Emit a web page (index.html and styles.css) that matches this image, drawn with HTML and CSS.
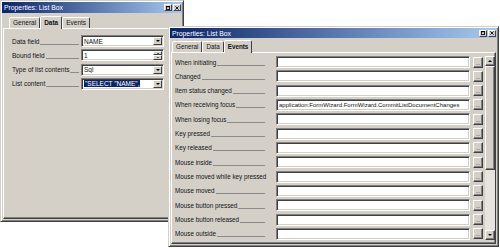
FILE: index.html
```html
<!DOCTYPE html>
<html>
<head>
    <title>Properties: List Box</title>
    <link rel="stylesheet" href="styles.css">
</head>
<body>
    <div class="window win-data">
        <div class="titlebar">
            <span>Properties: List Box</span>
            <div class="tbtns">
                <span class="tbtn"><svg viewBox="0 0 5 5"><rect x="0.5" y="0.5" width="4" height="4" fill="none" stroke="#000"/><rect x="0" y="0" width="5" height="1.5" fill="#000"/></svg></span>
                <span class="tbtn"><svg viewBox="0 0 5 5"><path d="M0.5 0.5L4.5 4.5M4.5 0.5L0.5 4.5" stroke="#000" stroke-width="1.1"/></svg></span>
            </div>
        </div>
        <div class="tabs">
            <span class="tab">General</span>
            <span class="tab active">Data</span>
            <span class="tab">Events</span>
        </div>
        <div class="panel">
            <div class="data-rows">
                <span class="label">Data field</span>
                <div class="field"><span class="value">NAME</span><span class="drop"></span></div>

                <span class="label">Bound field</span>
                <div class="field"><span class="value">1</span><span class="spin"><span class="up"></span><span class="down"></span></span></div>

                <span class="label">Type of list contents</span>
                <div class="field"><span class="value">Sql</span><span class="drop"></span></div>

                <span class="label">List content</span>
                <div class="field"><span class="value"><span class="sel">"SELECT "NAME",</span></span><span class="drop"></span></div>
            </div>
        </div>
    </div>

    <div class="window win-events">
        <div class="titlebar">
            <span>Properties: List Box</span>
            <div class="tbtns">
                <span class="tbtn"><svg viewBox="0 0 5 5"><rect x="0.5" y="0.5" width="4" height="4" fill="none" stroke="#000"/><rect x="0" y="0" width="5" height="1.5" fill="#000"/></svg></span>
                <span class="tbtn"><svg viewBox="0 0 5 5"><path d="M0.5 0.5L4.5 4.5M4.5 0.5L0.5 4.5" stroke="#000" stroke-width="1.1"/></svg></span>
            </div>
        </div>
        <div class="tabs">
            <span class="tab">General</span>
            <span class="tab">Data</span>
            <span class="tab active">Events</span>
        </div>
        <div class="panel">
            <div class="events-body">
                <div class="events-rows">
                    <span class="label">When initiating</span><div class="field"></div><span class="dots">...</span>
                    <span class="label">Changed</span><div class="field"></div><span class="dots">...</span>
                    <span class="label">Item status changed</span><div class="field"></div><span class="dots">...</span>
                    <span class="label">When receiving focus</span><div class="field macro">application:FormWizard.FormWizard.CommitListDocumentChanges</div><span class="dots">...</span>
                    <span class="label">When losing focus</span><div class="field"></div><span class="dots">...</span>
                    <span class="label">Key pressed</span><div class="field"></div><span class="dots">...</span>
                    <span class="label">Key released</span><div class="field"></div><span class="dots">...</span>
                    <span class="label">Mouse inside</span><div class="field"></div><span class="dots">...</span>
                    <span class="label">Mouse moved while key pressed</span><div class="field"></div><span class="dots">...</span>
                    <span class="label">Mouse moved</span><div class="field"></div><span class="dots">...</span>
                    <span class="label">Mouse button pressed</span><div class="field"></div><span class="dots">...</span>
                    <span class="label">Mouse button released</span><div class="field"></div><span class="dots">...</span>
                    <span class="label">Mouse outside</span><div class="field"></div><span class="dots">...</span>
                </div>
                <div class="scrollbar">
                    <span class="arrow arrow-up"></span>
                    <span class="thumb"></span>
                    <span class="track"></span>
                    <span class="arrow arrow-down"></span>
                </div>
            </div>
        </div>
    </div>
</body>
</html>
```

FILE: styles.css
```css
* {
    margin: 0;
    padding: 0;
    box-sizing: border-box;
}

body {
    position: relative;
    width: 500px;
    height: 249px;
    overflow: hidden;
    background: #fff;
    font-family: "Liberation Sans", Arial, sans-serif;
    font-size: 6.5px;
    color: #111;
}

/* windows on the desktop */
.window {
    position: absolute;
    display: flex;
    flex-direction: column;
    padding: 1px;
    background: #d4d0c8;
    border: 1px solid;
    border-color: #d4d0c8 #404040 #404040 #d4d0c8;
    box-shadow: inset 1px 1px #fff, inset -1px -1px #808080;
}

.win-data {
    left: 0;
    top: 0;
    width: 184px;
    height: 222px;
}

.win-events {
    left: 168px;
    top: 26px;
    width: 331px;
    height: 221px;
    font-size: 6.3px;
}

.titlebar {
    flex: none;
    height: 11px;
    display: flex;
    align-items: center;
    justify-content: space-between;
    padding: 0 1px 0 2px;
    background: linear-gradient(to right, #0a246a, #a6caf0);
    color: #fff;
    font-size: 6.8px;
}

.win-events .titlebar {
    height: 10px;
}

.tbtns {
    display: flex;
    gap: 1px;
}

.tbtn {
    width: 8px;
    height: 7px;
    display: flex;
    align-items: center;
    justify-content: center;
    background: #d4d0c8;
    border: 1px solid;
    border-color: #fff #404040 #404040 #fff;
}

.tbtn svg {
    width: 4px;
    height: 4px;
}

/* tabs */
.tabs {
    flex: none;
    display: flex;
    align-items: flex-end;
    height: 12px;
    margin-top: 3px;
    padding-left: 7px;
}

.win-events .tabs {
    margin-top: 2px;
    padding-left: 2px;
}

.tab {
    height: 11px;
    padding: 0 3px;
    line-height: 9px;
    background: #d4d0c8;
    border: 1px solid;
    border-bottom: none;
    border-color: #fff #404040 transparent #fff;
    border-radius: 2px 2px 0 0;
}

.tab.active {
    position: relative;
    height: 13px;
    margin-bottom: -1px;
    line-height: 11px;
    font-weight: bold;
}

.panel {
    flex: 1;
    margin: 0 1px 1px;
    border: 1px solid;
    border-color: #fff #404040 #404040 #fff;
    box-shadow: inset -1px -1px #808080;
}

.win-data .panel {
    padding: 6px 0 0 8px;
}

.win-events .panel {
    padding: 3px 0 0 3px;
}

/* rows */
.data-rows {
    display: grid;
    grid-template-columns: 68px 83px;
    grid-auto-rows: 12px;
    column-gap: 1px;
    row-gap: 2.3px;
}

.events-body {
    display: flex;
    gap: 2px;
}

.events-rows {
    display: grid;
    grid-template-columns: 98px 194px 10px;
    grid-auto-rows: 12px;
    column-gap: 3px;
    row-gap: 2.33px;
}

.label {
    display: flex;
    align-items: center;
    white-space: nowrap;
    overflow: hidden;
}

.label::after {
    content: "";
    flex: 1;
    height: 1px;
    margin: 6px 1px 0 1px;
    background: #8a8a8a;
}

.events-rows .label::after {
    margin-right: 8px;
}

.field {
    display: flex;
    align-items: center;
    padding: 0 1px 0 2px;
    overflow: hidden;
    white-space: nowrap;
    background: #fff;
    border: 1px solid;
    border-color: #808080 #fff #fff #808080;
    box-shadow: inset 1px 1px #404040, inset -1px -1px #d4d0c8;
}

.field .value {
    flex: 1;
    overflow: hidden;
}

.sel {
    background: #0a246a;
    color: #fff;
    padding: 0 1px;
}

.macro {
    font-size: 6px;
}

.drop {
    flex: none;
    width: 9px;
    height: 8px;
    display: flex;
    align-items: center;
    justify-content: center;
    background: #d4d0c8;
    border: 1px solid;
    border-color: #fff #404040 #404040 #fff;
}

.drop::before {
    content: "";
    border-left: 2px solid transparent;
    border-right: 2px solid transparent;
    border-top: 2px solid #000;
}

.spin {
    flex: none;
    width: 9px;
    height: 9px;
    display: flex;
    flex-direction: column;
}

.spin span {
    flex: 1;
    display: flex;
    align-items: center;
    justify-content: center;
    background: #d4d0c8;
    border: 1px solid;
    border-color: #fff #404040 #404040 #fff;
}

.spin .up::before {
    content: "";
    border-left: 1.5px solid transparent;
    border-right: 1.5px solid transparent;
    border-bottom: 1.5px solid #000;
}

.spin .down::before {
    content: "";
    border-left: 1.5px solid transparent;
    border-right: 1.5px solid transparent;
    border-top: 1.5px solid #000;
}

.dots {
    align-self: center;
    height: 11px;
    display: flex;
    align-items: flex-end;
    justify-content: center;
    font-size: 5px;
    line-height: 7px;
    background: #d4d0c8;
    border: 1px solid;
    border-color: #fff #404040 #404040 #fff;
    box-shadow: inset -1px -1px #808080;
}

/* scrollbar */
.scrollbar {
    width: 10px;
    display: flex;
    flex-direction: column;
    background: #e6e4df;
}

.arrow {
    flex: none;
    height: 10px;
    display: flex;
    align-items: center;
    justify-content: center;
    background: #d4d0c8;
    border: 1px solid;
    border-color: #fff #404040 #404040 #fff;
    box-shadow: inset -1px -1px #808080;
}

.arrow-up::before {
    content: "";
    border-left: 2px solid transparent;
    border-right: 2px solid transparent;
    border-bottom: 2px solid #000;
}

.arrow-down::before {
    content: "";
    border-left: 2px solid transparent;
    border-right: 2px solid transparent;
    border-top: 2px solid #000;
}

.thumb {
    flex: none;
    height: 104px;
    background: #d4d0c8;
    border: 1px solid;
    border-color: #fff #404040 #404040 #fff;
    box-shadow: inset -1px -1px #808080;
}

.track {
    flex: 1;
}
```
